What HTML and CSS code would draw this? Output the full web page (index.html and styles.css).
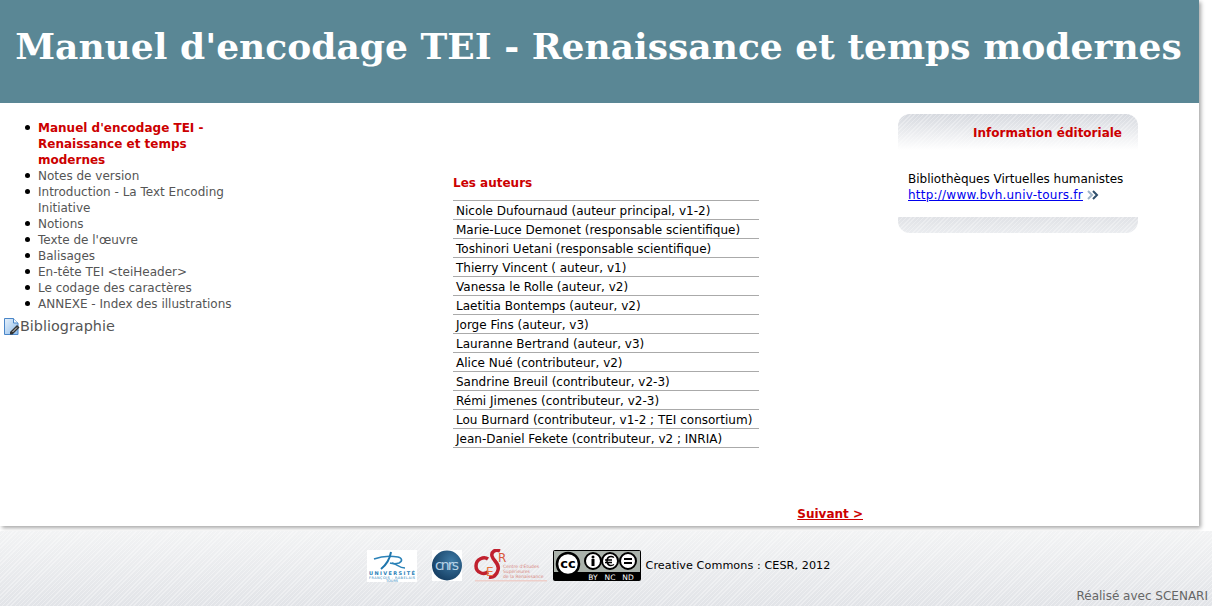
FILE: index.html
```html
<!DOCTYPE html>
<html>
<head>
  <title>Manuel d'encodage TEI - Renaissance et temps modernes</title>
  <meta charset="UTF-8">
  <link rel="stylesheet" href="styles.css">
</head>
<body>
<div class="sheet">
  <div class="banner"><h1>Manuel d'encodage TEI - Renaissance et temps modernes</h1></div>

  <div class="columns">
    <div class="nav">
      <ul>
        <li class="current">Manuel d'encodage TEI - Renaissance et temps modernes</li>
        <li>Notes de version</li>
        <li>Introduction - La Text Encoding Initiative</li>
        <li>Notions</li>
        <li>Texte de l'œuvre</li>
        <li>Balisages</li>
        <li>En-tête TEI &lt;teiHeader&gt;</li>
        <li>Le codage des caractères</li>
        <li>ANNEXE - Index des illustrations</li>
      </ul>
      <div class="biblio">
        <svg class="biblio-icon" width="16" height="17" viewBox="0 0 16 17">
          <defs>
            <linearGradient id="docFill" x1="0" y1="0" x2="1" y2="1">
              <stop offset="0" stop-color="#e6f1fb"/>
              <stop offset="1" stop-color="#8fbcea"/>
            </linearGradient>
          </defs>
          <path d="M0.500 0.500h9l4.500 4.500v11.500h-13.500z" fill="url(#docFill)" stroke="#4a86c8"/>
          <path d="M9.500 0.500v4.500h4.500" fill="#f2f8fd" stroke="#4a86c8"/>
          <path d="M6 14l7-7 2.500 2.500-7 7h-2.500z" fill="#333"/>
          <path d="M8.500 14l4.500-4.500" stroke="#ddd" stroke-width="1"/>
        </svg>
        <span>Bibliographie</span>
      </div>
    </div>

    <div class="middle">
      <h3>Les auteurs</h3>
      <table class="authors">
        <tr><td>Nicole Dufournaud (auteur principal, v1-2)</td></tr>
        <tr><td>Marie-Luce Demonet (responsable scientifique)</td></tr>
        <tr><td>Toshinori Uetani (responsable scientifique)</td></tr>
        <tr><td>Thierry Vincent ( auteur, v1)</td></tr>
        <tr><td>Vanessa le Rolle (auteur, v2)</td></tr>
        <tr><td>Laetitia Bontemps (auteur, v2)</td></tr>
        <tr><td>Jorge Fins (auteur, v3)</td></tr>
        <tr><td>Lauranne Bertrand (auteur, v3)</td></tr>
        <tr><td>Alice Nué (contributeur, v2)</td></tr>
        <tr><td>Sandrine Breuil (contributeur, v2-3)</td></tr>
        <tr><td>Rémi Jimenes (contributeur, v2-3)</td></tr>
        <tr><td>Lou Burnard (contributeur, v1-2 ; TEI consortium)</td></tr>
        <tr><td>Jean-Daniel Fekete (contributeur, v2 ; INRIA)</td></tr>
      </table>
      <div class="next"><a href="#">Suivant &gt;</a></div>
    </div>

    <div class="side">
      <div class="side-top">Information éditoriale</div>
      <div class="side-body">
        Bibliothèques Virtuelles humanistes<br>
        <a href="#">http://www.bvh.univ-tours.fr</a>
        <svg class="arrow" width="12" height="10" viewBox="0 0 12 10">
          <path d="M1 1l4 4-4 4" fill="none" stroke="#9fb4c6" stroke-width="2"/>
          <path d="M6 1l4 4-4 4" fill="none" stroke="#2f4f6c" stroke-width="2"/>
        </svg>
      </div>
      <div class="side-bottom"></div>
    </div>
  </div>
</div>

<div class="footer">
  <div class="logos">
    <svg class="logo-univ" width="50" height="32" viewBox="0 0 50 32">
      <rect width="50" height="32" fill="#fff"/>
      <path d="M7 9c8-3 18-3 24-2 4 1 5 4 1 6-3 1-6 1-9 0" fill="none" stroke="#2b82b8" stroke-width="1.600"/>
      <path d="M24 2c-1 6-5 13-10 17" fill="none" stroke="#1f76ad" stroke-width="2"/>
      <path d="M25 13c5 1 7 5 13 5" fill="none" stroke="#2b82b8" stroke-width="1.400"/>
      <text x="25" y="25" class="univ-name" textLength="46">UNIVERSITÉ</text>
      <text x="25" y="28.500" class="univ-small" textLength="46">FRANÇOIS - RABELAIS</text>
      <text x="25" y="32" class="univ-small">TOURS</text>
    </svg>
    <svg class="logo-cnrs" width="30" height="31" viewBox="0 0 30 31">
      <defs>
        <radialGradient id="cnrsBall" cx="0.650" cy="0.350" r="0.750">
          <stop offset="0" stop-color="#3f7ba6"/>
          <stop offset="1" stop-color="#123a5e"/>
        </radialGradient>
      </defs>
      <rect width="30" height="31" fill="#fff"/>
      <circle cx="15" cy="15.500" r="15" fill="url(#cnrsBall)"/>
      <text x="15" y="20" class="cnrs-name" textLength="24">cnrs</text>
    </svg>
    <svg class="logo-cesr" width="73" height="33" viewBox="0 0 73 33">
      <path d="M14 10c-4-3-12 0-12 7s8 9 12 6" fill="none" stroke="#c0202e" stroke-width="3.500"/>
      <path d="M26 2c-5-2-9 1-8 5 1 5 8 7 6 14-1 5-5 8-9 7" fill="none" stroke="#c0202e" stroke-width="3.500"/>
      <text x="24" y="13" class="cesr-r">R</text>
      <text x="12" y="27" class="cesr-e">E</text>
      <text x="29" y="19" class="cesr-small">Centre d'Études</text>
      <text x="29" y="24" class="cesr-small">Supérieures</text>
      <text x="29" y="29" class="cesr-small">de la Renaissance</text>
      <rect x="1" y="31" width="72" height="1.500" fill="#eecfca"/>
    </svg>
    <svg class="logo-cc" width="88" height="31" viewBox="0 0 88 31">
      <rect width="88" height="31" rx="2" fill="#000"/>
      <rect x="1" y="1" width="86" height="21" fill="#aab2ab"/>
      <circle cx="15" cy="14" r="11" fill="#fff" stroke="#000" stroke-width="2.500"/>
      <text x="15" y="18" class="cc-mark">cc</text>
      <circle cx="40" cy="11" r="8" fill="#fff" stroke="#000" stroke-width="2"/>
      <circle cx="40" cy="7" r="1.500" fill="#000"/>
      <rect x="38.500" y="9" width="3" height="7" fill="#000"/>
      <circle cx="57" cy="11" r="8" fill="#fff" stroke="#000" stroke-width="2"/>
      <path d="M61 7.500c-3-2-7-1-7 3.500s4 5.500 7 3.500M52 10h7M52 12.500h7" fill="none" stroke="#000" stroke-width="1.500"/>
      <circle cx="75" cy="11" r="8" fill="#fff" stroke="#000" stroke-width="2"/>
      <rect x="71" y="8" width="8" height="2" fill="#000"/>
      <rect x="71" y="12" width="8" height="2" fill="#000"/>
      <text x="40" y="29.500" class="cc-term">BY</text>
      <text x="57" y="29.500" class="cc-term">NC</text>
      <text x="75" y="29.500" class="cc-term">ND</text>
    </svg>
    <span class="licence">Creative Commons : CESR, 2012</span>
  </div>
  <div class="made">Réalisé avec SCENARI</div>
</div>
</body>
</html>
```

FILE: styles.css
```css
body {
  margin: 0; background: #fff; color: #000;
  font-family: "DejaVu Sans", Verdana, sans-serif; font-size: 12px; line-height: 16px;
}
.sheet {
  width: 1199px; background: #fff;
  box-shadow: 2px 2px 4px rgba(0,0,0,0.35);
}
.banner {
  height: 103px; background: #5a8795;
  display: flex; align-items: center; justify-content: center;
}
h1 {
  margin: 0 2px 0 0; color: #fff;
  font-family: "DejaVu Serif", Georgia, serif; font-size: 36px; font-weight: bold; line-height: 86px;
  padding-bottom: 12px; letter-spacing: 0.02px;
}
.columns { display: flex; height: 423px; }

.nav { width: 240px; flex: none; color: #555; }
.nav ul { margin: 17px 0 0 0; padding: 0 0 0 38px; list-style: none; }
.nav li { position: relative; }
.nav li::before {
  content: ""; position: absolute; left: -13px; top: 5px;
  width: 5px; height: 5px; border-radius: 50%; background: #000;
}
.current { color: #c00; font-weight: bold; }
.biblio {
  display: flex; align-items: center; margin: 6px 0 0 4px;
  font-size: 14.4px; line-height: 17px;
}
.biblio-icon { flex: none; }

.middle { width: 633px; flex: none; padding-left: 213px; box-sizing: border-box; }
h3 {
  margin: 72px 0 9px 0; color: #c00;
  font-size: 12px; font-weight: bold; line-height: 16px;
}
.authors { width: 306px; border-collapse: collapse; border-top: 1px solid #aaa; }
.authors td { padding: 2px 3px 0 3px; border-bottom: 1px solid #aaa; white-space: nowrap; }
.next { margin: 58px 10px 0 0; text-align: right; font-weight: bold; }
.next a { color: #c00; }

.side { width: 240px; flex: none; margin: 11px 0 0 25px; }
.side-top {
  height: 36px; box-sizing: border-box; padding: 11px 16px 0 0;
  text-align: right; color: #c00; font-weight: bold;
  border-radius: 12px 12px 0 0;
  background:
    repeating-linear-gradient(135deg, rgba(255,255,255,0.3) 0 1px, transparent 1px 3px),
    linear-gradient(#d6d9df, #fff);
}
.side-body { padding: 21px 10px 0 10px; height: 46px; }
.side-body a { color: #00e; letter-spacing: 0.23px; }
.arrow { margin-left: 0; vertical-align: -1px; }
.side-bottom {
  height: 16px;
  border-radius: 0 0 12px 12px;
  background:
    repeating-linear-gradient(135deg, rgba(255,255,255,0.3) 0 1px, transparent 1px 3px),
    linear-gradient(#e0e2e6, #eaecef);
}

.footer {
  margin-top: 5px; height: 75px; box-sizing: border-box; overflow: hidden;
  padding-top: 18px;
  background:
    repeating-linear-gradient(135deg, rgba(255,255,255,0.35) 0 1px, transparent 1px 3px),
    linear-gradient(#f2f3f4, #e2e4e8);
}
.logos {
  width: 1197px; height: 33px;
  display: flex; align-items: center; justify-content: center;
  font-size: 11.2px;
}
.logo-cnrs { margin-left: 15px; }
.logo-cesr { margin-left: 12px; }
.logo-cc { margin-left: 6px; }
.licence { margin-left: 5px; letter-spacing: 0.07px; }
.made { margin-top: 6px; padding-right: 4px; text-align: right; color: #666; }

/* tiny labels inside the logos */
.univ-name { font-size: 5px; font-weight: bold; fill: #2b82b8; text-anchor: middle; }
.univ-small { font-size: 3.500px; fill: #2b82b8; text-anchor: middle; }
.cnrs-name { font-size: 14px; fill: #b7d3e6; text-anchor: middle; }
.cesr-r { font-size: 12px; fill: #d9583a; }
.cesr-e { font-size: 12px; fill: #e8703a; }
.cesr-small { font-size: 4.500px; fill: #d9897f; }
.cc-mark { font-size: 13px; font-weight: bold; fill: #000; text-anchor: middle; }
.cc-term { font-size: 7.500px; fill: #fff; text-anchor: middle; }
```
